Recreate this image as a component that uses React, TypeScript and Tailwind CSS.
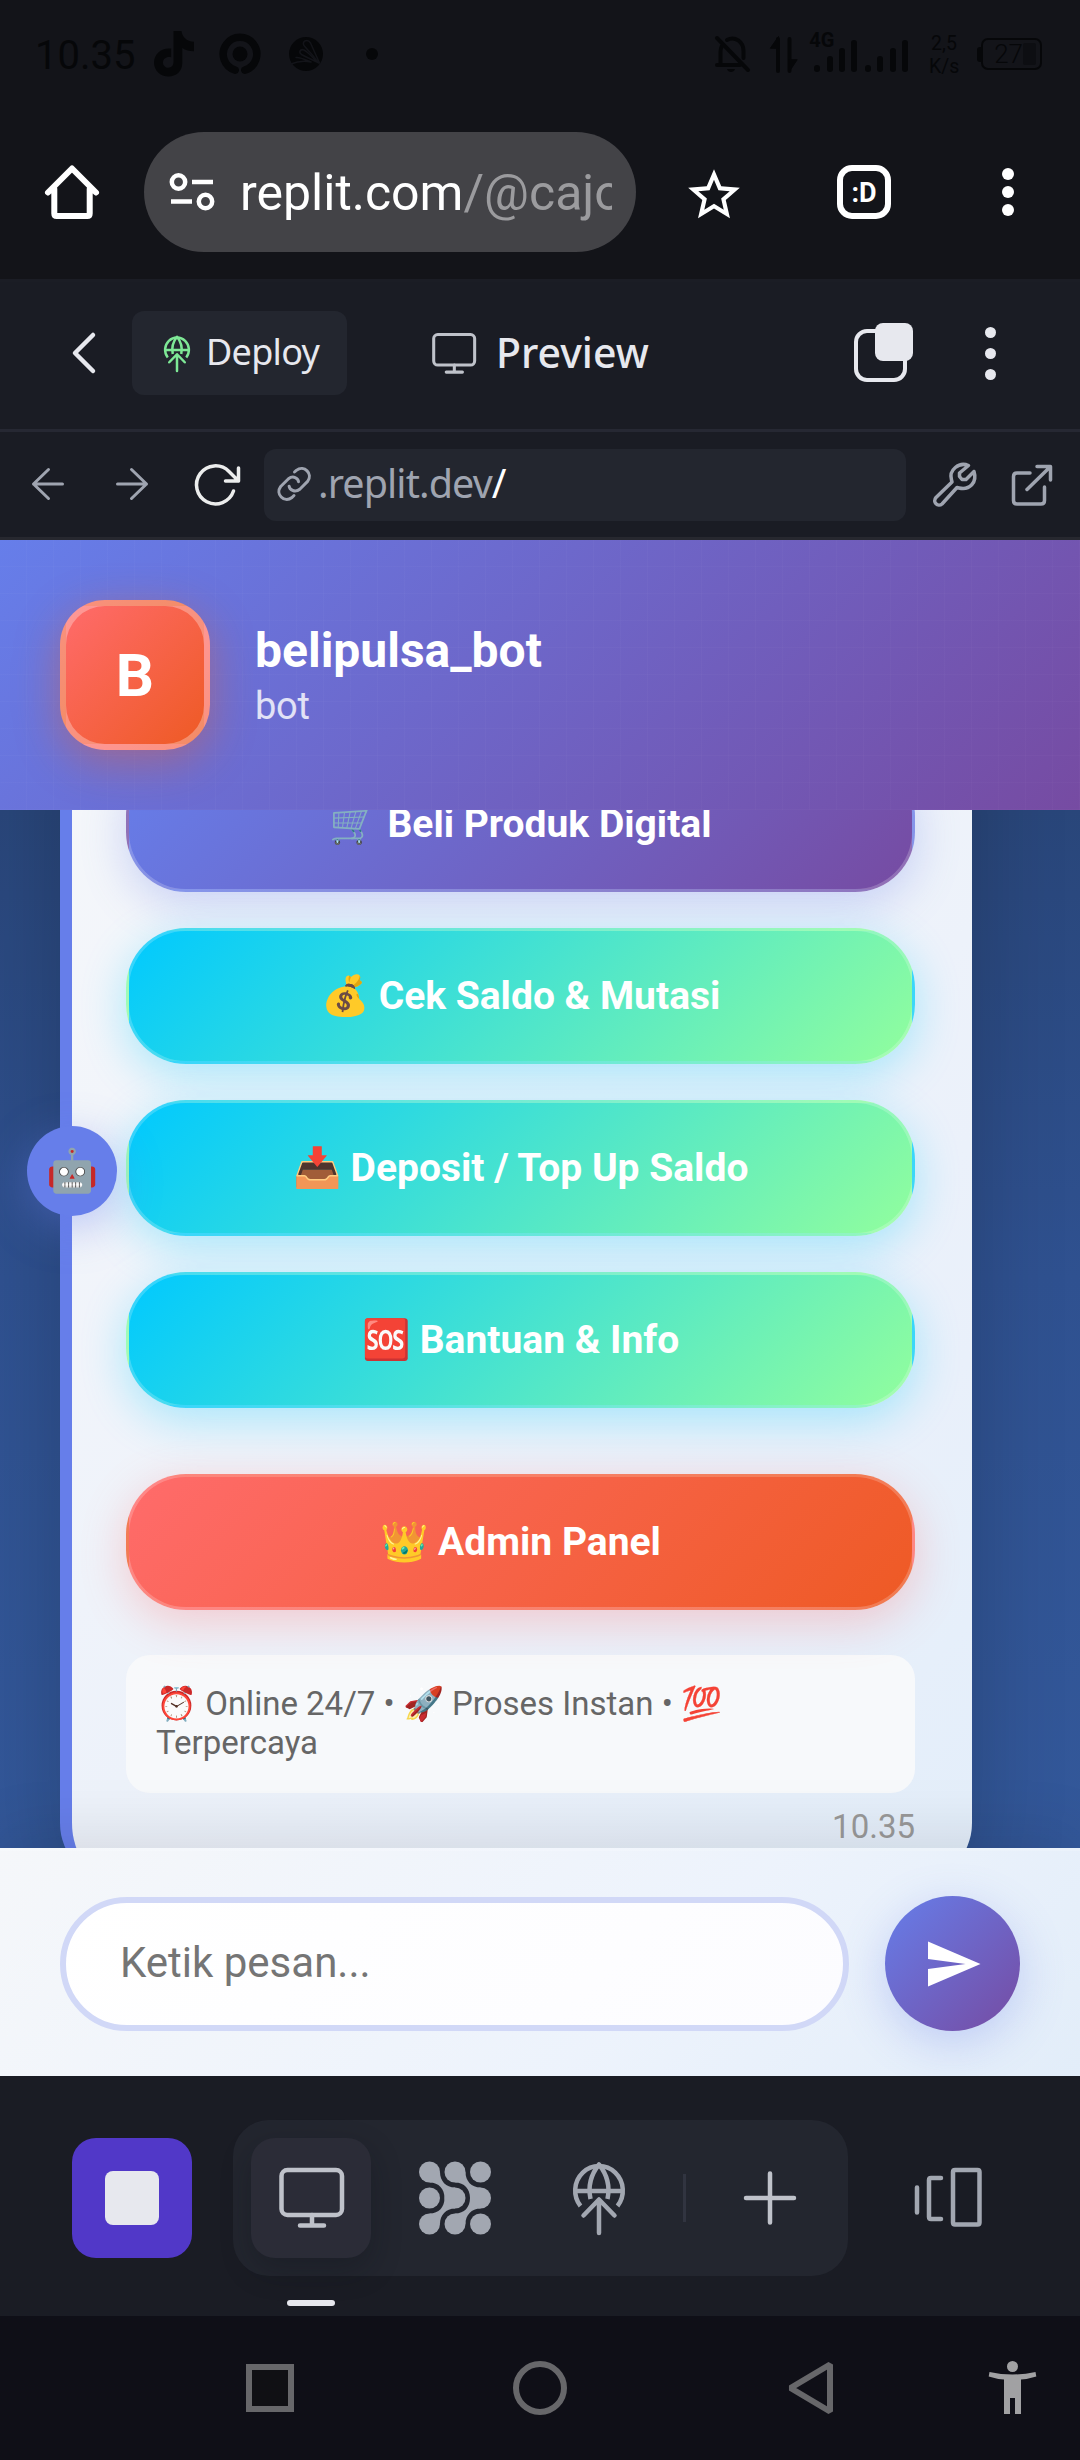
import type { ReactNode } from "react";

type IconProps = { w: number; h: number; box: string; className?: string; children: ReactNode };

function Icon({ w, h, box, className = "", children }: IconProps) {
  return (
    <svg
      width={w}
      height={h}
      viewBox={box}
      fill="none"
      stroke="currentColor"
      strokeLinecap="round"
      strokeLinejoin="round"
      className={"shrink-0 overflow-visible " + className}
    >
      {children}
    </svg>
  );
}

function Signal({ className }: { className: string }) {
  return (
    <div className={"flex h-8 items-end gap-[6.3px] " + className}>
      <i className="h-[7px] w-[6px] rounded-[3px] bg-[#060709]" />
      <i className="h-4 w-[6px] rounded-[3px] bg-[#060709]" />
      <i className="h-6 w-[6px] rounded-[3px] bg-[#060709]" />
      <i className="h-8 w-[6px] rounded-[3px] bg-[#060709]" />
    </div>
  );
}

function StatusBar() {
  return (
    <div className="flex h-[108px] items-center justify-between pr-[38px] pl-[35px] text-[#060709]">
      <div className="flex items-center">
        <span className="mt-1 w-[103px] text-[40px] leading-none">10.35</span>
        <Icon w={40} h={46} box="154 31 40 46" className="ml-4">
          <path
            fill="currentColor"
            stroke="none"
            d="M173.500 31h8c.6 5.800 4.800 10.200 12.500 10.800v9.500c-4.500 0-8.500-1-11.700-3.200v14.900c0 8.500-6.300 13.500-13.800 13.500-8.300 0-14.500-6-14.500-14 0-9 8.200-15.300 17.200-13.900v8.600c-4.300-1.200-8.200 1.300-8.200 5.300 0 3.200 2.500 5.300 5.300 5.300 3.300 0 5.200-2.300 5.200-5.700z"
          />
        </Icon>
        <Icon w={42} h={42} box="219 33 42 42" className="ml-[25px]">
          <path d="M235.200 70.200a16.800 16.800 0 1 1 9.600 0" strokeWidth="7.500" />
          <circle cx="240" cy="54" r="7.500" fill="currentColor" stroke="none" />
        </Icon>
        <Icon w={34} h={34} box="289 37 34 34" className="ml-7">
          <circle cx="306" cy="54" r="17" fill="currentColor" stroke="none" />
          <g stroke="#131419" strokeWidth="1.500">
            <path d="M319.500 63 310.500 43c-2.500-4-8-2.500-7 1.500.6 2.500 8 8 15 18.500" />
            <path d="M318 62.500c-8-7-9-10-14-12.500-4-1.500-5.500 2.500-2.500 4.500 3.500 2 10 5 16.500 8" />
            <path d="M291 64c7-3 15-3 20-2-6-2.500-11-5-15-4.500" />
          </g>
        </Icon>
        <i className="ml-[43px] size-3 rounded-full bg-current" />
      </div>
      <div className="flex items-center">
        <Icon w={36} h={40} box="717 34 36 40">
          <g strokeWidth="4">
            <path d="M722.500 65V52c0-2 .4-4 1.200-5.500M729 40c8-4.500 16.500 2 16.500 11v7M719 65h23" />
            <path d="m719 38 31 32" />
          </g>
          <path d="M729 69h8c-1 4-7 4-8 0z" fill="currentColor" stroke="none" />
        </Icon>
        <Icon w={28} h={37} box="772 37 28 37" className="ml-[19px]">
          <path d="M780 40v32m11.500-32v32" strokeWidth="4" />
          <path d="M772.500 49l8-11.500V49zM799 61l-8 12V61z" fill="currentColor" />
        </Icon>
        <div className="relative ml-[16px]">
          <Signal className="mt-1" />
          <span className="absolute -top-[6px] -left-[5px] text-[20px] leading-none font-bold">4G</span>
        </div>
        <Signal className="mt-1 ml-[8px]" />
        <div className="mt-[2px] ml-[21px] w-[30px] text-center text-[19.500px] leading-[23px]">
          2,5
          <br />
          K/s
        </div>
        <i className="ml-[18px] h-[15px] w-1 rounded-l-[3px] bg-current" />
        <div className="flex h-8 w-[61px] items-center justify-end rounded-[7px] border-[2.500px] border-[#060709] pr-[4px]">
          <span className="text-[26px] leading-none font-light">27</span>
          <i className="h-[22px] w-[13px] rounded-[2px] bg-[#0d0e12]" />
        </div>
      </div>
    </div>
  );
}

function BrowserBar() {
  return (
    <div className="flex h-[171px] items-center pb-[3px] text-white">
      <Icon w={54} h={54} box="45 165 54 54" className="ml-[45px]">
        <path d="M48 192.500 72 168.500l24 24M54.300 189v24.500q0 2.500 2.500 2.500h30.400q2.500 0 2.500-2.500V189" strokeWidth="6" />
      </Icon>
      <div className="ml-[45px] flex h-[120px] w-[492px] items-center rounded-full bg-[#434347] pr-6 pl-[25px]">
        <Icon w={46} h={38} box="169 173 46 38">
          <g strokeWidth="4.500" strokeLinecap="butt">
            <circle cx="178.500" cy="182" r="6.700" />
            <circle cx="205.500" cy="201.500" r="6.700" />
            <path d="M192 182h21M171 201.500h21" />
          </g>
        </Icon>
        <div className="mt-[2px] ml-[25px] flex-1 overflow-hidden text-[50px] leading-[64px] whitespace-nowrap">
          replit.com<span className="text-[#9b9b9e]">/@cajo</span>
        </div>
      </div>
      <svg width="62" height="62" viewBox="0 0 24 24" fill="currentColor" className="mt-[5px] ml-[47px] shrink-0">
        <path d="M22 9.240l-7.190-.62L12 2 9.190 8.630 2 9.240l5.460 4.730L5.820 21 12 17.270 18.180 21l-1.630-7.030L22 9.240zM12 15.400l-3.760 2.270 1-4.280-3.320-2.880 4.380-.38L12 6.100l1.710 4.040 4.380.38-3.320 2.880 1 4.280L12 15.400z" />
      </svg>
      <div className="ml-[92px] flex size-[54px] items-center justify-center rounded-[15px] border-6 border-white pt-[2px] text-[27px] leading-none font-bold">
        :D
      </div>
      <div className="ml-[111px] flex flex-col gap-[6px]">
        <i className="size-3 rounded-full bg-white" />
        <i className="size-3 rounded-full bg-white" />
        <i className="size-3 rounded-full bg-white" />
      </div>
    </div>
  );
}

function DeployGlyph({ w, h, stroke, className }: { w: number; h: number; stroke: number; className: string }) {
  return (
    <Icon w={w} h={h} box="573 2162 52 74" className={className}>
      <g strokeWidth={stroke}>
        <path d="M580.500 2207a23.800 24.500 0 1 1 37 0" strokeLinecap="butt" />
        <path d="M574 2192h50" strokeLinecap="butt" />
        <path d="M590.500 2200q-4-19 8.500-34.500 12.500 15.500 8.500 34.500" strokeLinecap="butt" />
        <path d="M599 2234v-33M583.500 2216.500 599 2200.500l15.500 16" />
      </g>
    </Icon>
  );
}

function Monitor({ w, h, stroke }: { w: number; h: number; stroke: number }) {
  return (
    <Icon w={w} h={h} box="278 2169 65 60">
      <g strokeWidth={stroke}>
        <rect x="280.500" y="2171" width="60.500" height="45" rx="6" />
        <path d="M311 2216v10M299 2226.500h24" />
      </g>
    </Icon>
  );
}

function ReplitHeader() {
  return (
    <div className="flex h-[153px] items-center border-y-[3px] border-t-[#1b1d25] border-b-[#262833] bg-[#1a1c24] pb-[5px] font-['Noto_Sans',sans-serif] text-[#e7e8ee]">
      <Icon w={22} h={42} box="73 332 22 42" className="ml-[73px]">
        <path d="M93 335 75 353l18 18" strokeWidth="4.500" />
      </Icon>
      <div className="ml-[37px] flex h-[84px] w-[215px] items-center rounded-xl bg-[#23262f] pl-8">
        <DeployGlyph w={26} h={37} stroke={5} className="text-[#7ee896]" />
        <span className="mb-[2px] ml-[16px] text-[36px] leading-none tracking-[-0.700px]">Deploy</span>
      </div>
      <div className="ml-[85px] flex items-center text-[#bfc2ca]">
        <Monitor w={44} h={41} stroke={4.500} />
        <span className="mb-[2px] ml-5 text-[41px] leading-none font-medium text-[#e7e8ee]">Preview</span>
      </div>
      <Icon w={60} h={60} box="856 323 60 60" className="ml-auto">
        <rect x="857" y="331" width="49" height="49" rx="11" strokeWidth="4" />
        <rect x="876" y="323" width="38" height="38" rx="8" fill="currentColor" stroke="none" />
      </Icon>
      <div className="mr-[84px] ml-[70px] flex flex-col gap-[10px]">
        <i className="size-[11px] rounded-full bg-current" />
        <i className="size-[11px] rounded-full bg-current" />
        <i className="size-[11px] rounded-full bg-current" />
      </div>
    </div>
  );
}

function UrlBar() {
  return (
    <div className="flex h-[108px] items-center border-b-[3px] border-[#27282f] bg-[#1a1c24] font-['Noto_Sans',sans-serif]">
      <Icon w={32} h={33} box="32 469 32 33" className="ml-8 text-[#9fa4b0]">
        <path d="M48.500 470.500 33.500 485l15 14.500M33.500 485h29" strokeWidth="3" />
      </Icon>
      <Icon w={32} h={33} box="116 469 32 33" className="ml-[52px] text-[#9fa4b0]">
        <path d="m131.500 470.500 15 14.500-15 14.500M146.500 485h-29" strokeWidth="3" />
      </Icon>
      <Icon w={44} h={42} box="196 464 44 42" className="ml-12 text-[#eceded]">
        <path d="M233.500 491a19 19 0 1 1-4.500-19.500l9.500 9.500M238.500 468v13h-13" strokeWidth="3.500" />
      </Icon>
      <div className="ml-6 flex h-[72px] w-[642px] items-center rounded-xl bg-[#23262f] pl-[14px] text-[#9fa4b0]">
        <Icon w={32} h={33} box="278 469 32 33">
          <g strokeWidth="3">
            <path d="m294.500 473 1.800-1.600c8-6 17 3.500 11.300 11l-7.800 7.800c-4.600 3.600-10.300.9-10.700-3" />
            <path d="m294 496.500-2 2c-8 6-17-3.500-11.300-11l7.800-7.800c4.600-3.600 9.800-.5 10 3" />
          </g>
        </Icon>
        <span className="mb-[2px] ml-[8px] text-[39.500px] leading-none tracking-[-0.900px]">
          .replit.dev<span className="text-white">/</span>
        </span>
      </div>
      <Icon w={42} h={43} box="934 463 42 43" className="ml-7 text-[#9fa4b0]">
        <path
          d="M968.500 465.500c-9.500-4-20 4.500-17 14.500l.5 2-16 15.500c-4 4.500 2 10 6 6.500l15-16.500 2 .5c10.500 2.500 18.500-5.500 15-16.500l-8 8h-4l-2.500-3V473z"
          strokeWidth="3.500"
        />
      </Icon>
      <Icon w={40} h={42} box="1012 464 40 42" className="ml-9 text-[#9fa4b0]">
        <path d="M1030 473h-13q-3.500 0-3.500 3.500v24q0 3.500 3.500 3.500h24q3.500 0 3.500-3.500V487M1037 466.500h13.500V480M1050 467l-23 22.500" strokeWidth="3.500" />
      </Icon>
    </div>
  );
}

function ChatHeader() {
  return (
    <div className="relative z-10 flex h-[270px] items-center bg-[repeating-linear-gradient(90deg,transparent_0_26px,rgba(255,255,255,0.02)_26px_27px),repeating-linear-gradient(180deg,transparent_0_26px,rgba(255,255,255,0.02)_26px_27px),linear-gradient(135deg,#667eea,#764ba2)] pl-[60px] text-white">
      <div className="flex size-[150px] items-center justify-center rounded-[45px] border-6 border-white/30 bg-[linear-gradient(135deg,#ff6b6b,#ee5a24)] pt-[2px] text-[60px] font-bold shadow-[0_12px_45px_rgba(238,90,36,0.4)]">
        B
      </div>
      <div className="ml-[45px]">
        <div className="text-[48px] leading-[57px] font-bold">belipulsa_bot</div>
        <div className="mt-[5px] text-[38px] leading-[45px] tracking-[-0.300px] text-white/80">bot</div>
      </div>
    </div>
  );
}

const tones = {
  violet: "bg-[linear-gradient(135deg,#667eea,#764ba2)] shadow-[0_12px_45px_rgba(102,126,234,0.3)]",
  cyan: "bg-[linear-gradient(135deg,#00c9ff,#92fe9d)] shadow-[0_12px_45px_rgba(0,201,255,0.3)]",
  red: "bg-[linear-gradient(135deg,#ff6b6b,#ee5a24)] shadow-[0_12px_45px_rgba(255,107,107,0.3)]",
};

function ActionButton({ tone, emoji, label }: { tone: keyof typeof tones; emoji: string; label: string }) {
  return (
    <button
      className={
        "flex h-[136px] w-full items-center justify-center gap-[9px] rounded-[60px] border-[3px] border-white/20 text-[39px] font-bold text-white " +
        tones[tone]
      }
    >
      <span>{emoji}</span>
      <span>{label}</span>
    </button>
  );
}

function ChatArea() {
  return (
    <div className="h-[1038px] overflow-hidden bg-[linear-gradient(180deg,#29467a,#2f5190_45%,#33589a)] pl-[60px]">
      <div className="relative -mt-[150px] h-[1223px] w-[912px] rounded-[60px] border-l-12 border-[#667eea] bg-[linear-gradient(135deg,#f5f7fa_0%,#eff3fa_45%,#e9f0fa_75%,#e3eefa_100%)] px-[54px] pt-24 shadow-[0_24px_96px_rgba(0,0,0,0.2)]">
        <div className="absolute top-[466px] -left-[45px] flex size-[90px] items-center justify-center rounded-full bg-[#667eea] pb-[2px] text-[42px] shadow-[0_12px_45px_rgba(102,126,234,0.4)]">
          🤖
        </div>
        <div className="flex w-[789px] flex-col gap-9">
          <ActionButton tone="violet" emoji="🛒" label="Beli Produk Digital" />
          <ActionButton tone="cyan" emoji="💰" label="Cek Saldo & Mutasi" />
          <ActionButton tone="cyan" emoji="📥" label="Deposit / Top Up Saldo" />
          <ActionButton tone="cyan" emoji="🆘" label="Bantuan & Info" />
          <div className="mt-[30px]">
            <ActionButton tone="red" emoji="👑" label="Admin Panel" />
          </div>
        </div>
        <div className="mt-[45px] h-[138px] w-[789px] rounded-[24px] bg-[#f8f9fb]/95 px-[30px] pt-[29px] text-[33px] leading-[39px] text-[#666]">
          ⏰ Online 24/7 • 🚀 Proses Instan • 💯
          <br />
          Terpercaya
        </div>
        <div className="mt-[14px] w-[789px] text-right text-[33px] leading-[39px] text-[#999]">10.35</div>
      </div>
    </div>
  );
}

function Composer() {
  return (
    <div className="relative z-10 flex h-[228px] items-center border-t-[3px] border-white/30 bg-[linear-gradient(135deg,#f5f7fa,#edf3fc_60%,#e2edf9)] pl-[60px] shadow-[0_-12px_60px_rgba(0,0,0,0.1)]">
      <div className="flex h-[134px] w-[789px] items-center rounded-full border-6 border-[#d1d8f7] bg-[linear-gradient(135deg,#ffffff,#fcfcff)] pb-[2px] pl-[54px] text-[42px] text-[#757575]">
        Ketik pesan...
      </div>
      <div className="ml-9 flex size-[135px] items-center justify-center rounded-full bg-[linear-gradient(135deg,#667eea,#764ba2)] text-white shadow-[0_12px_45px_rgba(102,126,234,0.3)]">
        <svg width="60" height="60" viewBox="0 0 24 24" fill="currentColor">
          <path d="M2.010 21 23 12 2.010 3 2 10l15 2-15 2z" />
        </svg>
      </div>
    </div>
  );
}

function AgentGlyph() {
  return (
    <Icon w={72} h={74} box="0 0 72 74" className="ml-12 text-[#a2a7b1]">
      <g fill="currentColor" stroke="none">
        <circle cx="10.500" cy="11" r="10.500" />
        <circle cx="36" cy="11" r="10.500" />
        <circle cx="61.500" cy="11" r="10.500" />
        <circle cx="10.500" cy="37" r="10.500" />
        <circle cx="36" cy="37" r="10.500" />
        <circle cx="61.500" cy="37" r="10.500" />
        <circle cx="10.500" cy="63" r="10.500" />
        <circle cx="36" cy="63" r="10.500" />
        <circle cx="61.500" cy="63" r="10.500" />
        <path d="M21 11c0 9 6 15.500 15 15.500v21c-9 0-15 6.500-15 15.500L10.500 52.500C20 52.500 25.500 46 25.500 37S20 21.500 10.500 21.500z" />
        <path d="M46.500 11c0 9 6 15.500 15 15.500v21c-9 0-15 6.500-15 15.500L36 52.500C45.500 52.500 51 46 51 37S45.500 21.500 36 21.500z" />
      </g>
    </Icon>
  );
}

function Toolbar() {
  return (
    <div className="relative z-10 flex h-[240px] items-start bg-[#1a1c24] pt-11 pl-[72px]">
      <div className="mt-[18px] flex size-[120px] items-center justify-center rounded-[24px] bg-[#5138c8]">
        <i className="size-[54px] rounded-[8px] bg-[#e7e8ee]" />
      </div>
      <div className="ml-[41px] flex h-[156px] w-[615px] items-center rounded-[36px] bg-[#23262f] pl-[18px]">
        <div className="relative flex size-[120px] items-center justify-center rounded-[24px] bg-[#2b2c37] text-[#bfc2ca] shadow-[0_12px_30px_rgba(14,15,23,0.3)]">
          <Monitor w={65} h={60} stroke={4.500} />
          <i className="absolute -bottom-12 h-[6px] w-12 rounded-full bg-[#e7e8ee]" />
        </div>
        <AgentGlyph />
        <DeployGlyph w={52} h={74} stroke={4.500} className="ml-[82px] text-[#a2a7b1]" />
        <i className="ml-[58px] h-12 w-[3px] bg-[#313440]" />
        <Icon w={52} h={54} box="0 0 52 54" className="ml-[58px] text-[#bfc2ca]">
          <path d="M26 2.500v49M2 27h48" strokeWidth="4.500" />
        </Icon>
      </div>
      <Icon w={68} h={60} box="914 2169 68 60" className="mt-12 ml-[66px] text-[#a2a7b1]">
        <path
          d="M917 2188.500v25M941 2179h-10q-2 0-2 2v37q0 2 2 2h10M955 2171h22.500q2 0 2 2v50.500q0 2-2 2H955q-2 0-2-2V2173q0-2 2-2z"
          strokeWidth="4.500"
        />
      </Icon>
    </div>
  );
}

function NavBar() {
  return (
    <div className="relative z-10 flex h-36 items-center bg-[#0f0f17] pl-[246px] text-[#67676a]">
      <i className="size-12 border-6 border-current bg-[#101014]" />
      <i className="ml-[219px] size-[54px] rounded-full border-6 border-current" />
      <Icon w={46} h={54} box="788 2361 46 54" className="ml-[221px]">
        <path d="M830 2364.500v47l-39.500-23.500z" strokeWidth="6" strokeLinejoin="bevel" />
      </Icon>
      <Icon w={47} h={54} box="989 2362 47 54" className="ml-[155px] text-[#a1a1a3]">
        <g fill="currentColor" stroke="none">
          <circle cx="1012.500" cy="2367.500" r="5.500" />
          <path d="M989.500 2373q23 5 46 0l.8 4.500q-8 2.500-15.300 3V2415h-6v-16h-5v16h-6v-34.500q-7.500-.5-15.300-3z" />
        </g>
      </Icon>
    </div>
  );
}

export default function App() {
  return (
    <div className="flex h-[2460px] w-[1080px] flex-col overflow-hidden bg-[#131419] font-['Roboto',sans-serif]">
      <StatusBar />
      <BrowserBar />
      <ReplitHeader />
      <UrlBar />
      <ChatHeader />
      <ChatArea />
      <Composer />
      <Toolbar />
      <NavBar />
    </div>
  );
}
